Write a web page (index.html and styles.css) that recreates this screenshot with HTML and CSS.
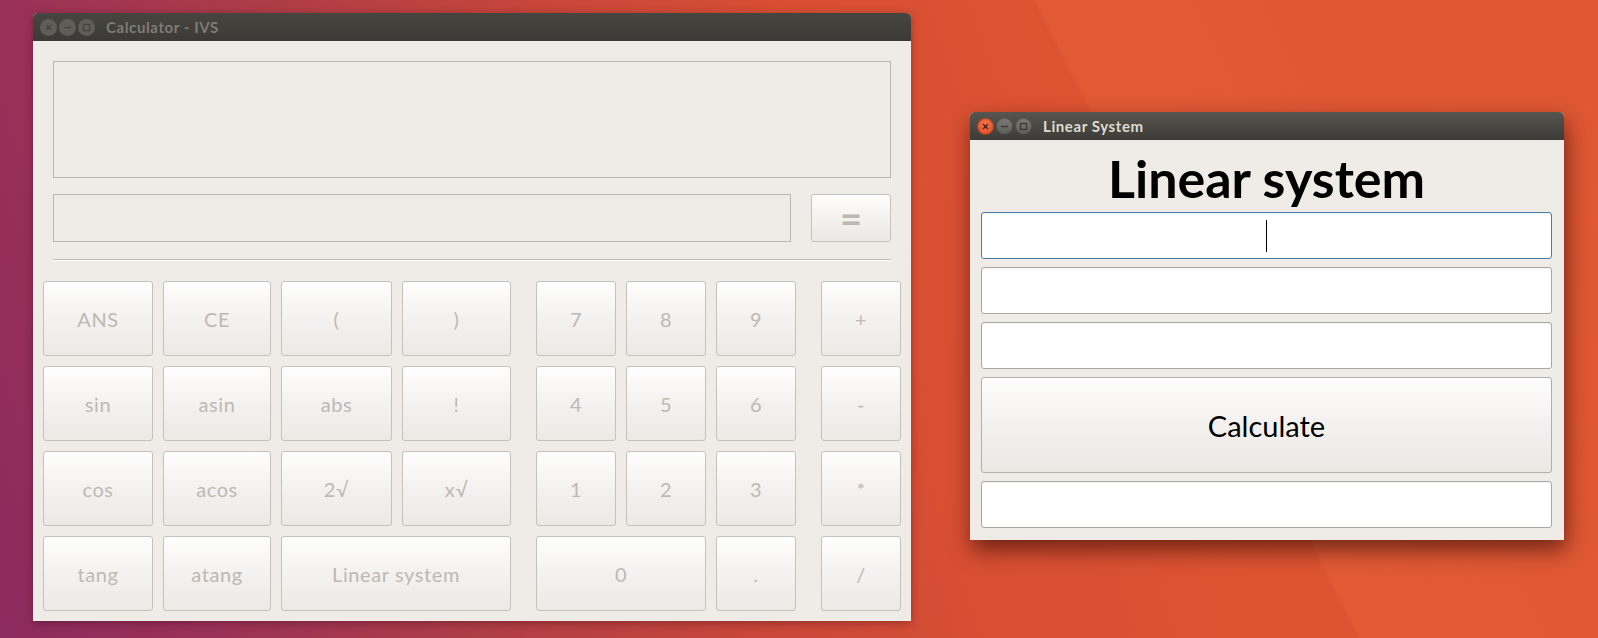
FILE: index.html
```html
<!DOCTYPE html>
<html>
<head>
<meta charset="utf-8">
<link rel="stylesheet" href="styles.css">
</head>
<body>
<div class="desktop">
  <section class="window calc-window">
    <header class="titlebar inactive">
      <div class="controls">
        <span class="ctl close"><svg viewBox="0 0 17 17" width="17" height="17"><line x1="6" y1="6" x2="11" y2="11"/><line x1="11" y1="6" x2="6" y2="11"/></svg></span>
        <span class="ctl"><svg viewBox="0 0 17 17" width="17" height="17"><line x1="5" y1="8.5" x2="12" y2="8.5"/></svg></span>
        <span class="ctl"><svg viewBox="0 0 17 17" width="17" height="17"><rect x="5.5" y="5.5" width="6" height="6"/></svg></span>
      </div>
      <span class="title">Calculator - IVS</span>
    </header>
    <div class="calc-body">
      <div class="display"></div>
      <div class="entry-row">
        <div class="entry"></div>
        <button class="key eq">=</button>
      </div>
      <div class="sep"></div>
      <div class="keys">
        <button class="key">ANS</button>
        <button class="key">CE</button>
        <button class="key">(</button>
        <button class="key">)</button>
        <button class="key num-start">7</button>
        <button class="key">8</button>
        <button class="key">9</button>
        <button class="key op">+</button>

        <button class="key">sin</button>
        <button class="key">asin</button>
        <button class="key">abs</button>
        <button class="key">!</button>
        <button class="key num-start">4</button>
        <button class="key">5</button>
        <button class="key">6</button>
        <button class="key op">-</button>

        <button class="key">cos</button>
        <button class="key">acos</button>
        <button class="key">2√</button>
        <button class="key">x√</button>
        <button class="key num-start">1</button>
        <button class="key">2</button>
        <button class="key">3</button>
        <button class="key op">*</button>

        <button class="key">tang</button>
        <button class="key">atang</button>
        <button class="key wide">Linear system</button>
        <button class="key zero">0</button>
        <button class="key">.</button>
        <button class="key op">/</button>
      </div>
    </div>
  </section>

  <section class="window linear-window">
    <header class="titlebar active">
      <div class="controls">
        <span class="ctl close"><svg viewBox="0 0 17 17" width="17" height="17"><line x1="6" y1="6" x2="11" y2="11"/><line x1="11" y1="6" x2="6" y2="11"/></svg></span>
        <span class="ctl"><svg viewBox="0 0 17 17" width="17" height="17"><line x1="5" y1="8.5" x2="12" y2="8.5"/></svg></span>
        <span class="ctl"><svg viewBox="0 0 17 17" width="17" height="17"><rect x="5.5" y="5.5" width="6" height="6"/></svg></span>
      </div>
      <span class="title">Linear System</span>
    </header>
    <div class="linear-body">
      <h1 class="linear-title">Linear system</h1>
      <div class="field focused"><span class="caret"></span></div>
      <div class="field"></div>
      <div class="field"></div>
      <button class="calc-btn">Calculate</button>
      <div class="field"></div>
    </div>
  </section>
</div>
</body>
</html>
```

FILE: styles.css
```css
html, body {
  margin: 0;
  padding: 0;
  width: 1598px;
  height: 638px;
  overflow: hidden;
}

.desktop {
  position: relative;
  width: 1598px;
  height: 638px;
  font-family: "Lato", "Open Sans", sans-serif;
  background:
    linear-gradient(63deg, rgba(255,140,80,0) 70.6%, rgba(255,140,80,0.13) 70.8%, rgba(255,140,80,0.05) 85%, rgba(255,140,80,0.02) 100%),
    linear-gradient(72deg, #8c2b5e 0%, #9a3157 12%, #b13e45 28%, #c9463a 42%, #d84f33 55%, #dd5332 70%, #df5633 100%);
}

.window {
  position: absolute;
  display: flex;
  flex-direction: column;
  background: #efebe7;
  border-radius: 5px 5px 0 0;
}

.calc-window {
  left: 33px;
  top: 13px;
  width: 878px;
  height: 608px;
  box-shadow: 0 2px 10px rgba(40, 0, 20, 0.35);
}

.linear-window {
  left: 970px;
  top: 112px;
  width: 594px;
  height: 428px;
  box-shadow: 2px 10px 22px rgba(40, 5, 0, 0.6);
}

/* ---------- title bar ---------- */
.titlebar {
  height: 28px;
  flex: none;
  display: flex;
  align-items: center;
  border-radius: 5px 5px 0 0;
  background: linear-gradient(#57554f, #3c3b37);
  padding-left: 7px;
}

.titlebar.inactive {
  background: linear-gradient(#46453f, #3b3a36);
}

.controls {
  display: flex;
  gap: 2px;
}

.ctl {
  width: 17px;
  height: 17px;
  border-radius: 50%;
  display: flex;
  background: linear-gradient(#7d7b75, #5d5b56);
  box-shadow: inset 0 0 0 1px rgba(0,0,0,0.25);
}

.ctl svg {
  stroke: #3a3935;
  stroke-width: 1.3;
  fill: none;
}

.inactive .ctl {
  background: #5f5d58;
  box-shadow: none;
}

.inactive .ctl svg {
  stroke: #44433f;
}

.active .ctl.close {
  background: radial-gradient(circle at 50% 40%, #f57a4f, #e0512a 70%, #c9461f);
}

.active .ctl.close svg {
  stroke: #3b1a10;
}

.title {
  margin-left: 11px;
  font-family: "Lato", "Open Sans", sans-serif;
  font-weight: 700;
  font-size: 15px;
  letter-spacing: 0.6px;
}

.inactive .title {
  color: #7f7c75;
}

.active .title {
  color: #dfdbd2;
}

/* ---------- calculator ---------- */
.calc-body {
  flex: 1;
  display: flex;
  flex-direction: column;
  padding: 20px 20px 10px;
}

.display {
  height: 115px;
  border: 1px solid #bcb7b2;
  background: #efebe7;
}

.entry-row {
  display: flex;
  gap: 20px;
  margin-top: 16px;
  height: 48px;
}

.entry {
  flex: 1;
  border: 1px solid #bcb7b2;
  background: #efebe7;
}

.sep {
  margin-top: 17px;
  height: 1px;
  background: #bdb8b3;
  border-bottom: 1px solid #ffffff;
}

.key {
  box-sizing: border-box;
  margin: 0;
  padding: 0;
  border: 1px solid #c6c1bc;
  border-radius: 3px;
  background: linear-gradient(#fefefe, #f4f2f0 50%, #ece9e5);
  color: #bdb9b4;
  font-family: "Lato", "Open Sans", sans-serif;
  font-size: 20px;
  letter-spacing: 0.6px;
  font-weight: 400;
}

.key.eq {
  width: 80px;
  flex: none;
  font-size: 38px;
  font-weight: 700;
  letter-spacing: 0;
  line-height: 1;
  color: #bcb8b3;
}

.keys {
  margin: 20px -10px 0;
  display: grid;
  grid-template-columns: 110px 108px 111px 109px 5px 80px 80px 80px 5px 80px;
  grid-template-rows: repeat(4, 75px);
  gap: 10px;
}

.num-start { grid-column: 6; }
.op { grid-column: 10; }
.wide { grid-column: 3 / span 2; }
.zero { grid-column: 6 / span 2; }

/* ---------- linear system ---------- */
.linear-body {
  flex: 1;
  display: flex;
  flex-direction: column;
  gap: 8px;
  padding: 0 12px 12px 11px;
}

.linear-title {
  margin: 0 0 -8px;
  height: 72px;
  display: flex;
  align-items: center;
  justify-content: center;
  padding-top: 4px;
  box-sizing: border-box;
  font-family: "Lato", "Open Sans", sans-serif;
  font-weight: 700;
  font-size: 52px;
  color: #000;
}

.field {
  box-sizing: border-box;
  height: 47px;
  border: 1px solid #aca7a2;
  border-radius: 3px;
  background: #ffffff;
  box-shadow: inset 0 1px 1px rgba(0,0,0,0.05);
  display: flex;
  align-items: center;
  justify-content: center;
}

.field.focused {
  border-color: #4a7eaa;
}

.caret {
  width: 1px;
  height: 32px;
  background: #000;
}

.calc-btn {
  box-sizing: border-box;
  height: 96px;
  margin: 0;
  border: 1px solid #b3aea9;
  border-radius: 3px;
  background: linear-gradient(#fdfdfd, #f3f1ef 50%, #ebe8e4);
  color: #000;
  font-family: "Lato", "Open Sans", sans-serif;
  font-size: 29px;
}
```
